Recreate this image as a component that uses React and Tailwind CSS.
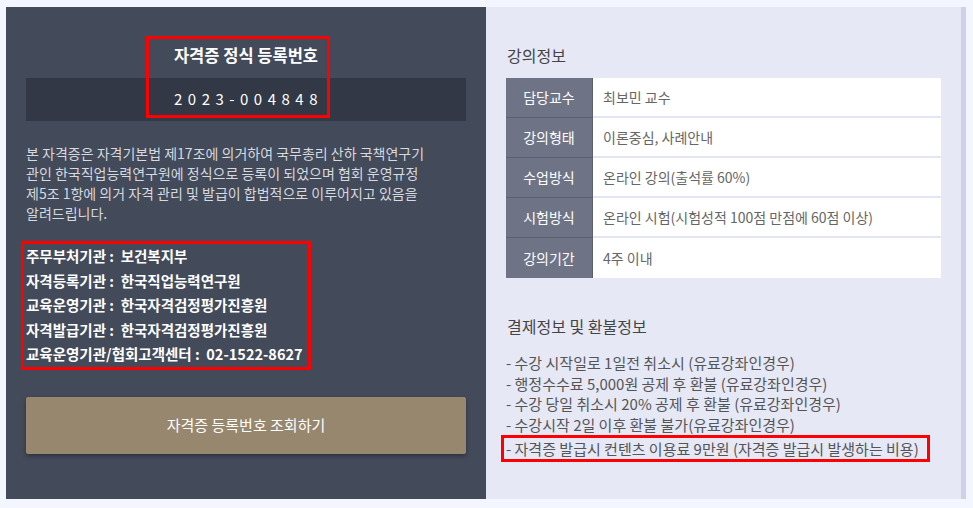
import React from 'react';

const font = { fontFamily: '"Noto Sans CJK KR", "Noto Sans", sans-serif' };

const lecture = [
  ['담당교수', '최보민 교수'],
  ['강의형태', '이론중심, 사례안내'],
  ['수업방식', '온라인 강의(출석률 60%)'],
  ['시험방식', '온라인 시험(시험성적 100점 만점에 60점 이상)'],
  ['강의기간', '4주 이내'],
];

const agencies = [
  ['주무부처기관', '보건복지부'],
  ['자격등록기관', '한국직업능력연구원'],
  ['교육운영기관', '한국자격검정평가진흥원'],
  ['자격발급기관', '한국자격검정평가진흥원'],
  ['교육운영기관/협회고객센터', '02-1522-8627'],
];

const refunds = [
  '- 수강 시작일로 1일전 취소시 (유료강좌인경우)',
  '- 행정수수료 5,000원 공제 후 환불 (유료강좌인경우)',
  '- 수강 당일 취소시 20% 공제 후 환불 (유료강좌인경우)',
  '- 수강시작 2일 이후 환불 불가(유료강좌인경우)',
];

const App = () => {
  return (
    <div className="w-[973px] h-[508px] bg-[#f3f6fe] pt-[7px] pl-[6px] flex" style={font}>
      {/* left: registration */}
      <div className="w-[480px] h-[492px] bg-[#434a5a] px-[20px] pt-[38px]">
        <div className="relative">
          <h2 className="text-center text-white font-bold text-[16.5px] leading-[20px]">자격증 정식 등록번호</h2>
          <div className="mt-[13px] h-[43px] bg-[#323845] flex items-center justify-center">
            <span className="text-white text-[15px] tracking-[5.5px] pl-[5px]">2023-004848</span>
          </div>
          <div className="absolute left-[120px] top-[-9px] w-[184px] h-[82px] border-[3px] border-[#ff0000]" />
        </div>

        <p className="mt-[22px] text-[14px] leading-[20px] text-[#d6d9df] whitespace-nowrap">
          본 자격증은 자격기본법 제17조에 의거하여 국무총리 산하 국책연구기<br />
          관인 한국직업능력연구원에 정식으로 등록이 되었으며 협회 운영규정<br />
          제5조 1항에 의거 자격 관리 및 발급이 합법적으로 이루어지고 있음을<br />
          알려드립니다.
        </p>

        <div className="mt-[18px] -ml-[5px] w-[290px] border-[3px] border-[#ff0000] pl-[2px]">
          {agencies.map(([k, v]) => (
            <div key={k} className="text-white font-bold text-[14.5px] leading-[24.5px] whitespace-nowrap">
              {k} :&nbsp; {v}
            </div>
          ))}
        </div>

        <button className="mt-[27px] w-full h-[57px] bg-[#98876f] text-white text-[15px] rounded-[2px] shadow-[0_2px_4px_rgba(0,0,0,0.35)]">
          자격증 등록번호 조회하기
        </button>
      </div>

      {/* right: lecture info */}
      <div className="w-[475px] h-[492px] bg-[#e6e8f6] px-[20px] pt-[38px]">
        <h3 className="text-[16px] leading-[20px] text-[#444] pl-[1px]">강의정보</h3>
        <div className="mt-[13px] w-[435px]">
          {lecture.map(([k, v], i) => (
            <div key={k} className="flex h-[40px]">
              <div className={`w-[87px] bg-[#6e7486] border-r border-[#5a6070] text-white text-[14px] flex items-center justify-center ${i < lecture.length - 1 ? 'border-b' : ''}`}>
                {k}
              </div>
              <div className={`flex-1 bg-white text-[#666] text-[14px] flex items-center pl-[10px] border-[#e3e5f3] ${i < lecture.length - 1 ? 'border-b-2' : ''}`}>
                {v}
              </div>
            </div>
          ))}
        </div>

        <h3 className="mt-[38px] text-[16px] leading-[20px] text-[#444] pl-[1px]">결제정보 및 환불정보</h3>
        <ul className="mt-[17px] text-[15px] leading-[20.5px] text-[#555]">
          {refunds.map((r) => (
            <li key={r} className="whitespace-nowrap">{r}</li>
          ))}
          <li className="whitespace-nowrap">
            <span className="inline-block -ml-[5px] border-[3px] border-[#ff0000] pl-[2px] pr-[8px] leading-[21px]">
              - 자격증 발급시 컨텐츠 이용료 9만원 (자격증 발급시 발생하는 비용)
            </span>
          </li>
        </ul>
      </div>
      <div className="w-[5px] h-[492px] bg-[#d0d1e6]" />
    </div>
  );
};

export default App;
